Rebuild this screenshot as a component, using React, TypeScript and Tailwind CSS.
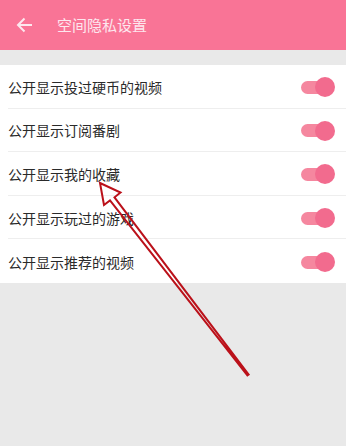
import React from "react";

const items = [
  "公开显示投过硬币的视频",
  "公开显示订阅番剧",
  "公开显示我的收藏",
  "公开显示玩过的游戏",
  "公开显示推荐的视频",
];

function Toggle() {
  return (
    <div className="relative w-[34px] h-[20px] flex items-center">
      <div className="w-[26px] h-[13px] rounded-full bg-[#f5879f]" />
      <div className="absolute right-0 top-0 w-[20px] h-[20px] rounded-full bg-[#f26b8e]" />
    </div>
  );
}

export default function App() {
  return (
    <div
      className="relative w-[346px] h-[446px] bg-[#e9e9e9] overflow-hidden"
      style={{ fontFamily: '"Noto Sans CJK SC", "Noto Sans", sans-serif' }}
    >
      <div className="h-[50px] bg-[#f97496] flex items-center">
        <svg className="ml-[16px]" width="17" height="16" viewBox="0 0 17 16" fill="none">
          <path d="M16 8H2M8.5 1.5L2 8l6.5 6.5" stroke="#fde7ee" strokeWidth="2" />
        </svg>
        <span className="ml-[24px] text-[15px] text-[#fde6ee]">空间隐私设置</span>
      </div>
      <div className="h-[15px]" />
      <div className="bg-white pl-[8px]">
        {items.map((t, i) => (
          <div
            key={t}
            className={`h-[43.6px] flex items-center justify-between pr-[11px] pt-[2px] ${
              i < items.length - 1 ? "border-b border-[#eeeeee]" : ""
            }`}
          >
            <span className="text-[14px] text-[#2a2a2a]">{t}</span>
            <Toggle />
          </div>
        ))}
      </div>
      <svg className="absolute left-0 top-0" width="346" height="446" viewBox="0 0 346 446">
        <polygon
          points="100,183 120.5,192.5 114.5,197.3 248.6,374.6 247.4,375.4 110,200.5 104,205"
          fill="none"
          stroke="#bb111a"
          strokeWidth="2"
          strokeLinejoin="miter"
        />
      </svg>
    </div>
  );
}
